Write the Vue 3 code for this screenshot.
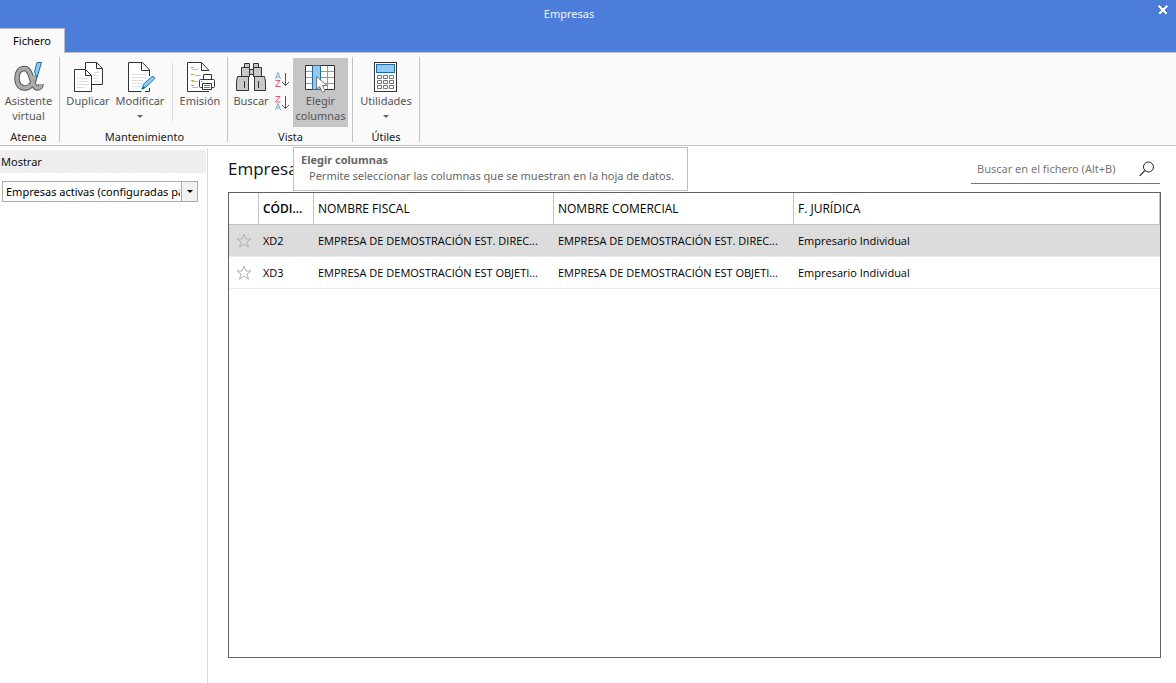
<script setup>
import { ref } from 'vue'

const filter = ref('activas')
const search = ref('')

const rows = [
  { code: 'XD2', fiscal: 'EMPRESA DE DEMOSTRACIÓN EST. DIREC...', comercial: 'EMPRESA DE DEMOSTRACIÓN EST. DIREC...', forma: 'Empresario Individual' },
  { code: 'XD3', fiscal: 'EMPRESA DE DEMOSTRACIÓN EST OBJETI...', comercial: 'EMPRESA DE DEMOSTRACIÓN EST OBJETI...', forma: 'Empresario Individual' },
]
const selected = ref('XD2')
</script>

<template>
  <div class="window">
    <header class="titlebar">
      <div class="title">Empresas</div>
      <button class="close" type="button" aria-label="Cerrar">
        <svg width="10" height="10" viewBox="0 0 10 10" shape-rendering="crispEdges"><path d="M1 1L9 9M9 1L1 9" stroke="#fff" stroke-width="2.4" /></svg>
      </button>
      <button class="tab" type="button">Fichero</button>
    </header>

    <div class="ribbon">
      <section class="group atenea">
        <div class="tools">
          <button class="tool" type="button">
            <svg width="32" height="32" viewBox="0 0 32 32">
              <path d="M22 13C21.500 20 17.500 26 12 26C7 26 4 22.500 4 16C4 10 7 6.500 11.500 6.500C19.500 6.500 18 26 24.500 26C26.500 26 28 24.500 28 22" fill="none" stroke="#555" stroke-width="5.500" />
              <path d="M22 13C21.500 20 17.500 26 12 26C7 26 4 22.500 4 16C4 10 7 6.500 11.500 6.500C19.500 6.500 18 26 24.500 26C26.500 26 28 24.500 28 22" fill="none" stroke="#ababab" stroke-width="3.500" />
              <path d="M24 .5H28.500L24 15.500L21.500 10Z" fill="#91c9f0" stroke="#1b6ca8" />
            </svg>
            <span>Asistente<br />virtual</span>
          </button>
        </div>
        <div class="caption">Atenea</div>
      </section>

      <section class="group mantenimiento">
        <div class="tools">
          <button class="tool" type="button">
            <svg width="32" height="32" viewBox="0 0 32 32">
              <g fill="#fff" stroke="#333">
                <path d="M13.500 .5H24.500L30.500 6.500V22.500H13.500Z" />
                <path d="M24.500 .5V6.500H30.500" fill="none" />
                <path d="M2.500 7.500H13.500L19.500 13.500V29.500H2.500Z" />
                <path d="M13.500 7.500V13.500H19.500" fill="none" />
              </g>
              <path d="M22 10.500H27M22 13.500H27M22 16.500H27M22 19.500H27M5 16.500H16M5 19.500H16M5 22.500H16M5 25.500H13" stroke="#ddd" fill="none" />
            </svg>
            <span>Duplicar</span>
          </button>
          <button class="tool" type="button">
            <svg width="32" height="32" viewBox="0 0 32 32">
              <path d="M17.500 29.500H4.500V.5H18.500L25.500 8V14M25.500 26V29.500H21" fill="#fff" stroke="#333" />
              <path d="M17.500 .5V8.500H25.500" fill="none" stroke="#333" />
              <path d="M8 12.500H22M8 15.500H22M8 18.500H20M8 21.500H18M8 24.500H17" stroke="#ddd" />
              <path d="M18 27L19.500 22L28 14.500Q31 14 30.500 17L22 25Z" fill="#8fc6ee" stroke="#2786c5" />
              <path d="M18 27L20.500 25" stroke="#1768a0" stroke-width="2" />
            </svg>
            <span>Modificar</span>
            <i class="caret"></i>
          </button>
          <span class="divider"></span>
          <button class="tool" type="button">
            <svg width="32" height="32" viewBox="0 0 32 32">
              <path d="M20.500 29.500H3.500V.5H17.500L24.500 7.500V29.500Z" fill="#fff" />
              <path d="M25 29.500H3.500V.5H17.500L25 8.500" fill="none" stroke="#333" />
              <path d="M17.500 .5V8.500H25" fill="none" stroke="#333" />
              <path d="M7 5.500H10M7 12.500H10M7 18.500H10M7 23.500H10" stroke="#e5a11b" />
              <path d="M8 7.500H14M11 13.500H17M8 19.500H14M8 25.500H14" stroke="#bbb" />
              <g fill="#fff" stroke="#333">
                <path d="M19.500 17V12.500H27.500V17" />
                <rect x="15.500" y="17.500" width="15" height="8" rx="1" />
                <path d="M18.500 21.500H27.500V27.500H18.500Z" />
              </g>
              <path d="M20 23.500H26M20 25.500H26" stroke="#777" />
              <path d="M17 19.500H18" stroke="#2786c5" />
            </svg>
            <span>Emisión</span>
          </button>
        </div>
        <div class="caption">Mantenimiento</div>
      </section>

      <section class="group vista">
        <div class="tools">
          <button class="tool" type="button">
            <svg width="32" height="32" viewBox="0 0 32 32">
              <g fill="#c8c8c6" stroke="#333">
                <path d="M14.500 7.500H18.500V12.500H14.500Z" />
                <path d="M9.500 1.500H14.500V5.500H9.500ZM18.500 1.500H23.500V5.500H18.500Z" />
                <path d="M6.500 5.500H14.500V14.500H6.500ZM18.500 5.500H26.500V14.500H18.500Z" />
                <path d="M2.500 14.500H13.500V28.500H1.500V20Z" />
                <path d="M19.500 14.500H29.500L30.500 20V28.500H19.500Z" />
              </g>
              <path d="M9.500 19V26M23.500 19V26" stroke="#333" />
            </svg>
            <span>Buscar</span>
          </button>
          <div class="sorts">
            <button type="button" aria-label="Orden ascendente">
              <svg width="17" height="18" viewBox="0 0 17 18" fill="none">
                <path d="M2.500 8L5 1.500L7.500 8M3.500 6H6.500" stroke="#6aaedb" />
                <path d="M2.500 9.500H7L2.500 15.500H7.500" stroke="#e0596a" />
                <path d="M12.500 2V14.500M9 11L12.500 14.500L16 11" stroke="#555" />
              </svg>
            </button>
            <button type="button" aria-label="Orden descendente">
              <svg width="17" height="18" viewBox="0 0 17 18" fill="none">
                <path d="M2.500 2.500H7L2.500 8H7.500" stroke="#e0596a" />
                <path d="M2.500 16L5 9.500L7.500 16M3.500 14H6.500" stroke="#6aaedb" />
                <path d="M12.500 2V14.500M9 11L12.500 14.500L16 11" stroke="#555" />
              </svg>
            </button>
          </div>
          <button class="tool active" type="button" aria-describedby="tip">
            <svg width="32" height="32" viewBox="0 0 32 32">
              <rect x=".5" y="3.500" width="29" height="24" fill="#fff" />
              <path d="M15.500 3V28M22.500 3V28M0 9.500H30M0 15.500H30M0 21.500H30" stroke="#999" />
              <path d="M8 3.500H.5V27.500H8M16 3.500H29.500V27.500H16" fill="none" stroke="#333" />
              <rect x="7.500" y="3.500" width="8" height="24" fill="#91c9f0" stroke="#1b6ca8" />
              <path d="M11.500 14.500V27L14.500 24.500L17.500 30.500L20 29L17.500 23.500H22Z" fill="#fff" stroke="#777" />
            </svg>
            <span>Elegir<br />columnas</span>
          </button>
        </div>
        <div class="caption">Vista</div>
      </section>

      <section class="group utiles">
        <div class="tools">
          <button class="tool" type="button">
            <svg width="32" height="32" viewBox="0 0 32 32">
              <rect x="4.500" y=".5" width="22" height="29" fill="#fff" stroke="#333" />
              <rect x="6.500" y="2.500" width="18" height="8" fill="#91c9f0" stroke="#1b6ca8" />
              <g fill="#fff" stroke="#777">
                <path d="M7.500 13.500H11.500V16.500H7.500ZM13.500 13.500H17.500V16.500H13.500ZM19.500 13.500H23.500V16.500H19.500ZM7.500 18.500H11.500V21.500H7.500ZM13.500 18.500H17.500V21.500H13.500ZM19.500 18.500H23.500V21.500H19.500ZM7.500 23.500H11.500V26.500H7.500ZM13.500 23.500H17.500V26.500H13.500ZM19.500 23.500H23.500V26.500H19.500Z" />
              </g>
            </svg>
            <span>Utilidades</span>
            <i class="caret"></i>
          </button>
        </div>
        <div class="caption">Útiles</div>
      </section>

      <div id="tip" class="tooltip" role="tooltip">
        <strong>Elegir columnas</strong>
        <p>Permite seleccionar las columnas que se muestran en la hoja de datos.</p>
      </div>
    </div>

    <div class="body">
      <aside class="sidebar">
        <label class="heading" for="filtro">Mostrar</label>
        <div class="combo">
          <select id="filtro" v-model="filter">
            <option value="activas">Empresas activas (configuradas para</option>
          </select>
          <span class="drop"><i></i></span>
        </div>
      </aside>

      <main class="main">
        <div class="topline">
          <h1>Empresas</h1>
          <div class="search">
            <input v-model="search" type="text" aria-label="Buscar en el fichero" placeholder="Buscar en el fichero (Alt+B)" />
            <button type="button" aria-label="Buscar">
              <svg width="16" height="16" viewBox="0 0 16 16"><circle cx="9.500" cy="6" r="5" fill="none" stroke="#222" /><path d="M5.800 9.600L.7 14.800" stroke="#222" stroke-width="1.200" /></svg>
            </button>
          </div>
        </div>

        <div class="grid">
          <table>
            <colgroup><col class="c-star" /><col class="c-code" /><col class="c-name" /><col class="c-name" /><col /></colgroup>
            <thead>
              <tr>
                <th aria-label="Favorito"></th>
                <th class="sorted">CÓDI...</th>
                <th>NOMBRE FISCAL</th>
                <th>NOMBRE COMERCIAL</th>
                <th>F. JURÍDICA</th>
              </tr>
            </thead>
            <tbody>
              <tr v-for="r in rows" :key="r.code" :class="{ selected: r.code === selected }" @click="selected = r.code">
                <td class="star">
                  <svg width="16" height="16" viewBox="0 0 16 16"><path d="M8 1.200L9.900 6H15L10.900 9L12.500 14.200L8 11.200L3.500 14.200L5.100 9L1 6H6.100Z" fill="none" stroke="#b0b0b0" /></svg>
                </td>
                <td>{{ r.code }}</td>
                <td>{{ r.fiscal }}</td>
                <td>{{ r.comercial }}</td>
                <td>{{ r.forma }}</td>
              </tr>
            </tbody>
          </table>
        </div>
      </main>
    </div>
  </div>
</template>

<style>
body {
  margin: 0;
  background: #fff;
}
</style>

<style scoped>
* {
  box-sizing: border-box;
}
.window {
  display: flex;
  flex-direction: column;
  min-height: 100vh;
  font-family: "Noto Sans", "Open Sans", sans-serif;
  font-size: 11px;
  line-height: 15px;
  color: #111;
}
button {
  margin: 0;
  padding: 0;
  border: 0;
  background: none;
  font: inherit;
  color: inherit;
}
svg {
  display: block;
}
.titlebar {
  position: relative;
  display: flex;
  flex-direction: column;
  align-items: flex-start;
  height: 52px;
  background: #4d7ddb;
}
.title {
  width: 100%;
  height: 28px;
  padding-right: 38px;
  line-height: 28px;
  text-align: center;
  color: #f2f5fc;
}
.close {
  position: absolute;
  top: 5px;
  right: 8px;
}
.tab {
  z-index: 1;
  flex: none;
  width: 65px;
  height: 25px;
  padding-bottom: 1px;
  border: 1px solid #bfbfbf;
  border-width: 1px 1px 0 0;
  background: #fafafa;
  color: #000;
}
.ribbon {
  position: relative;
  display: flex;
  height: 94px;
  padding-top: 4px;
  border-top: 1px solid #c3c3c3;
  border-bottom: 1px solid #c3c3c3;
  background: #fafafa;
}
.group {
  display: flex;
  flex-direction: column;
  height: 85px;
  border-right: 1px solid #c3c3c3;
}
.atenea { width: 60px; padding-right: 2px; }
.mantenimiento { width: 168px; padding-left: 2px; }
.vista { width: 125px; padding-left: 1px; }
.utiles { width: 67px; }
.tools {
  display: flex;
  flex: none;
  height: 73px;
  padding-top: 1px;
}
.tool {
  display: flex;
  flex-direction: column;
  align-items: center;
  flex: 1 1 auto;
  height: 69px;
  padding-top: 4px;
  color: #555;
}
.tool span {
  margin-top: -1px;
}
.tool.active {
  flex: none;
  width: 55px;
  margin-right: 4px;
  background: #c5c5c5;
}
.caret {
  margin-top: 7px;
  border: 3px solid transparent;
  border-top-color: #666;
  border-bottom: 0;
}
.mantenimiento .tool {
  flex: none;
  width: 52px;
}
.divider {
  width: 1px;
  height: 58px;
  margin: 5px 1px 0 6px;
  background: #d8d8d8;
}
.sorts {
  display: flex;
  flex-direction: column;
  gap: 5px;
  width: 20px;
  padding-top: 13px;
}
.caption {
  line-height: 14px;
  text-align: center;
  color: #222;
}
.tooltip {
  position: absolute;
  top: 94px;
  left: 293px;
  z-index: 2;
  width: 395px;
  height: 44px;
  padding: 4px 7px;
  border: 1px solid #bdbdbd;
  background: #fff;
  color: #666;
}
.tooltip strong {
  display: block;
}
.tooltip p {
  margin: 1px 0 0 8px;
  white-space: nowrap;
}
.body {
  display: flex;
  flex: 1;
}
.sidebar {
  flex: none;
  width: 208px;
  margin-top: 2px;
  padding-top: 2px;
  border-right: 1px solid #dadada;
}
.heading {
  display: block;
  height: 23px;
  margin-right: 1px;
  padding-left: 1px;
  background: #eee;
  line-height: 23px;
}
.combo {
  position: relative;
  width: 196px;
  height: 21px;
  margin: 8px 0 0 2px;
}
.combo select {
  width: 100%;
  height: 100%;
  padding: 0 17px 0 3px;
  border: 1px solid #ababab;
  border-radius: 0;
  background: #fff;
  appearance: none;
  font: inherit;
  color: #000;
}
.drop {
  position: absolute;
  top: 1px;
  right: 1px;
  display: flex;
  align-items: center;
  justify-content: center;
  width: 16px;
  height: 19px;
  border-left: 1px solid #ababab;
  background: #f2f2f2;
  pointer-events: none;
}
.drop i {
  border: 3px solid transparent;
  border-top-color: #000;
  border-bottom: 0;
}
.main {
  display: flex;
  flex-direction: column;
  flex: 1;
  min-width: 0;
  padding: 9px 15px 25px 20px;
}
.topline {
  display: flex;
  justify-content: space-between;
  height: 37px;
  padding-right: 1px;
}
h1 {
  margin: 0;
  font: 400 17px/28px "Open Sans", sans-serif;
}
.search {
  display: flex;
  align-items: center;
  justify-content: space-between;
  width: 189px;
  height: 29px;
  padding: 0 5px 0 6px;
  border-bottom: 1px solid #777;
}
.search input {
  flex: 1;
  min-width: 0;
  padding: 0 0 2px;
  border: 0;
  outline: 0;
  background: none;
  font: inherit;
}
.search input::placeholder {
  color: #777;
}
.grid {
  flex: 1;
  border: 1px solid #616161;
}
table {
  width: 100%;
  table-layout: fixed;
  border-collapse: separate;
  border-spacing: 0;
  font-family: "Open Sans", sans-serif;
  font-size: 12px;
  color: #000;
}
.c-star { width: 30px; }
.c-code { width: 55px; }
.c-name { width: 240px; }
th,
td {
  height: 32px;
  padding: 0 0 0 4px;
  text-align: left;
  white-space: nowrap;
}
th {
  border-right: 1px solid #c3c3c3;
  border-bottom: 1px solid #c3c3c3;
  font-weight: 400;
}
th.sorted {
  font-weight: 600;
}
td {
  border-bottom: 1px solid #ececec;
  font-size: 11px;
}
.selected td {
  background: #dcdcdc;
}
td.star {
  padding-left: 7px;
}
</style>
